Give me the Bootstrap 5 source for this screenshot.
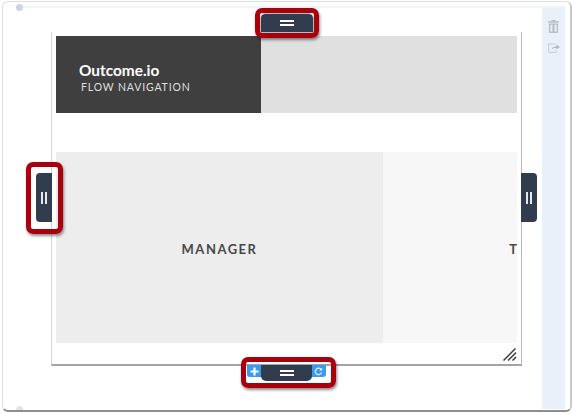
<!DOCTYPE html>
<html lang="en">
<head>
    <meta charset="UTF-8">
    <meta name="viewport" content="width=device-width, initial-scale=1.0">
    <title>Flow Navigation Layout</title>
    <link href="https://cdn.jsdelivr.net/npm/bootstrap@5.3.0/dist/css/bootstrap.min.css" rel="stylesheet">
    <style>
        html, body { height: 100%; }
        body {
            background: #fff;
            font-family: Lato, "Liberation Sans", sans-serif;
            overflow: hidden;
            padding: 1px 2px 2px 2px;
        }
        .editor-window {
            height: 411px;
            border: 1px solid #dcdee0;
            border-bottom: 2px solid #8e8e8e;
            border-right: 2px solid #c9c9c9;
            border-radius: 6px;
            padding-top: 5px;
            position: relative;
        }
        .editor-topline {
            position: absolute; left: 14px; right: 4px; top: 4px;
            height: 2px; background: #f2f3f4;
        }
        .editor-dot { position: absolute; left: 13px; width: 7px; background: #ccd3dc; }
        .editor-dot-top { top: 2px; height: 7px; border-radius: 50%; }
        .editor-dot-bottom { bottom: 0; height: 4px; border-radius: 4px 4px 0 0; background: #dfe3e8; }
        .editor-stage { flex: 1; padding: 25px 20px 0 48px; min-width: 0; }
        .editor-side {
            width: 23px; height: 402px; margin-right: 5px;
            background: #e9f0fa; padding-top: 13px;
        }
        .side-icon { display: block; margin: 0 auto 10px; }
        .layout-frame {
            position: relative;
            width: 471px; height: 334px;
            background: #fff;
            border: 1px solid #d6d6d6;
            border-top: 0;
            border-right: 1px solid #b8b8b8;
            border-bottom: 2px solid #a4a4a4;
            padding: 4px 4px 0 4px;
        }
        .head-row { height: 77px; }
        .head-brand {
            width: 205px; background: #3f3f3f; color: #fff;
            padding: 25px 0 0 23px;
        }
        .brand-name { font-size: 15.4px; font-weight: 700; line-height: 18px; }
        .brand-sub {
            font-size: 10.5px; letter-spacing: .85px; line-height: 14px;
            color: #dfdfdf; margin: 1px 0 0 2px;
        }
        .head-fill { flex: 1; background: #e0e0e0; }
        .body-row { height: 191px; margin-top: 39px; }
        .cell-manager, .cell-other { padding-top: 4px; }
        .cell-manager {
            width: 327px; background: #ededed; color: #484848;
            font-size: 13px; font-weight: 700; letter-spacing: 1.5px;
        }
        .cell-other {
            flex: 1; background: #f7f7f7; color: #484848; overflow: hidden;
            font-size: 13px; font-weight: 700;
        }
        .resize-grip { position: absolute; right: 4px; bottom: 3px; }
        .grip-bar {
            position: absolute; background: #323c4f;
            color: #fff; display: flex; align-items: center; justify-content: center;
        }
        .grip-top { left: 209px; top: -18px; width: 52px; height: 18px; border-radius: 4px 4px 0 0; outline: 1px solid #b9bcc2; }
        .grip-bottom { left: 209px; bottom: -17px; width: 51px; height: 16px; border-radius: 0 0 5px 5px; z-index: 2; }
        .grip-left { left: -16px; top: 141px; width: 16px; height: 49px; border-radius: 4px 0 0 4px; }
        .grip-right { right: -16px; top: 141px; width: 16px; height: 49px; border-radius: 0 4px 4px 0; }
        .lines-h { width: 14px; height: 6px; border-top: 2px solid #fff; border-bottom: 2px solid #fff; }
        .lines-v { width: 6px; height: 12px; border-left: 2px solid #e6e8ec; border-right: 2px solid #e6e8ec; }
        .blue-tab {
            position: absolute; bottom: -13px; width: 15px; height: 12px;
            background: #3b99ee; display: flex; align-items: center; justify-content: center;
        }
        .tab-add { left: 195px; border-radius: 0 0 0 3px; }
        .tab-reload { left: 259px; border-radius: 0 0 3px 0; }
        .callout {
            position: absolute; border: 5px solid #a9000e; border-radius: 7px;
            box-shadow: 1px 2px 3px rgba(0, 0, 0, .45); z-index: 5; pointer-events: none;
        }
        .callout-top { left: 255px; top: 8px; width: 64px; height: 30px; }
        .callout-left { left: 26px; top: 162px; width: 37px; height: 72px; }
        .callout-bottom { left: 241px; top: 357px; width: 95px; height: 31px; }
    </style>
</head>
<body>
    <div class="editor-window d-flex">
        <div class="editor-topline"></div>
        <div class="editor-dot editor-dot-top"></div>
        <div class="editor-dot editor-dot-bottom"></div>

        <div class="editor-stage">
            <div class="layout-frame">
                <div class="head-row d-flex">
                    <div class="head-brand">
                        <div class="brand-name">Outcome.io</div>
                        <div class="brand-sub">FLOW NAVIGATION</div>
                    </div>
                    <div class="head-fill"></div>
                </div>
                <div class="body-row d-flex">
                    <div class="cell-manager d-flex align-items-center justify-content-center">MANAGER</div>
                    <div class="cell-other d-flex align-items-center justify-content-end">T</div>
                </div>

                <svg class="resize-grip" width="14" height="13" viewBox="0 0 14 13" fill="none" stroke="#3a3a3a" stroke-width="1.5">
                    <path d="M0.5 12.5 L12.5 0.5"/>
                    <path d="M5 12.5 L13 4.5"/>
                    <path d="M9.5 12.5 L13 9"/>
                </svg>

                <div class="grip-bar grip-top"><div class="lines-h"></div></div>
                <div class="grip-bar grip-left"><div class="lines-v"></div></div>
                <div class="grip-bar grip-right"><div class="lines-v"></div></div>
                <div class="grip-bar grip-bottom"><div class="lines-h"></div></div>

                <div class="blue-tab tab-add">
                    <svg width="9" height="9" viewBox="0 0 9 9"><path d="M3.4 0.5h2.2v2.9h2.9v2.2H5.6v2.9H3.4V5.6H0.5V3.4h2.9z" fill="#fff"/></svg>
                </div>
                <div class="blue-tab tab-reload">
                    <svg width="9" height="9" viewBox="0 0 9 9" fill="none"><path d="M7.2 2.6A3.2 3.2 0 1 0 7.6 5.4" stroke="#e8f3fe" stroke-width="1.2"/><path d="M8.2 0.8V3.6H5.4z" fill="#e8f3fe"/></svg>
                </div>
            </div>
        </div>

        <div class="editor-side">
            <svg class="side-icon" width="11" height="13" viewBox="0 0 12 14" fill="#bcc0c5">
                <path d="M4 0h4l.6 1.4H12v1.6H0V1.4h3.4zM1 3.6h10V14H1zM2.6 5.2v7.2h2.2V5.2zM7.2 5.2v7.2h2.2V5.2z" fill-rule="evenodd"/>
            </svg>
            <svg class="side-icon" width="12" height="10" viewBox="0 0 12 10" fill="none">
                <path d="M7.5 1H.7v8.3h7.6V7.6" stroke="#c6cacf" stroke-width="1"/>
                <path d="M3.6 6.2C4.2 4.2 5.8 3.4 8.4 3.4V1.6L12 4.1 8.4 6.6V4.9C6.4 4.9 4.8 5.2 3.6 6.2z" fill="#b4b8bd"/>
            </svg>
        </div>
    </div>

    <div class="callout callout-top"></div>
    <div class="callout callout-left"></div>
    <div class="callout callout-bottom"></div>
</body>
</html>
